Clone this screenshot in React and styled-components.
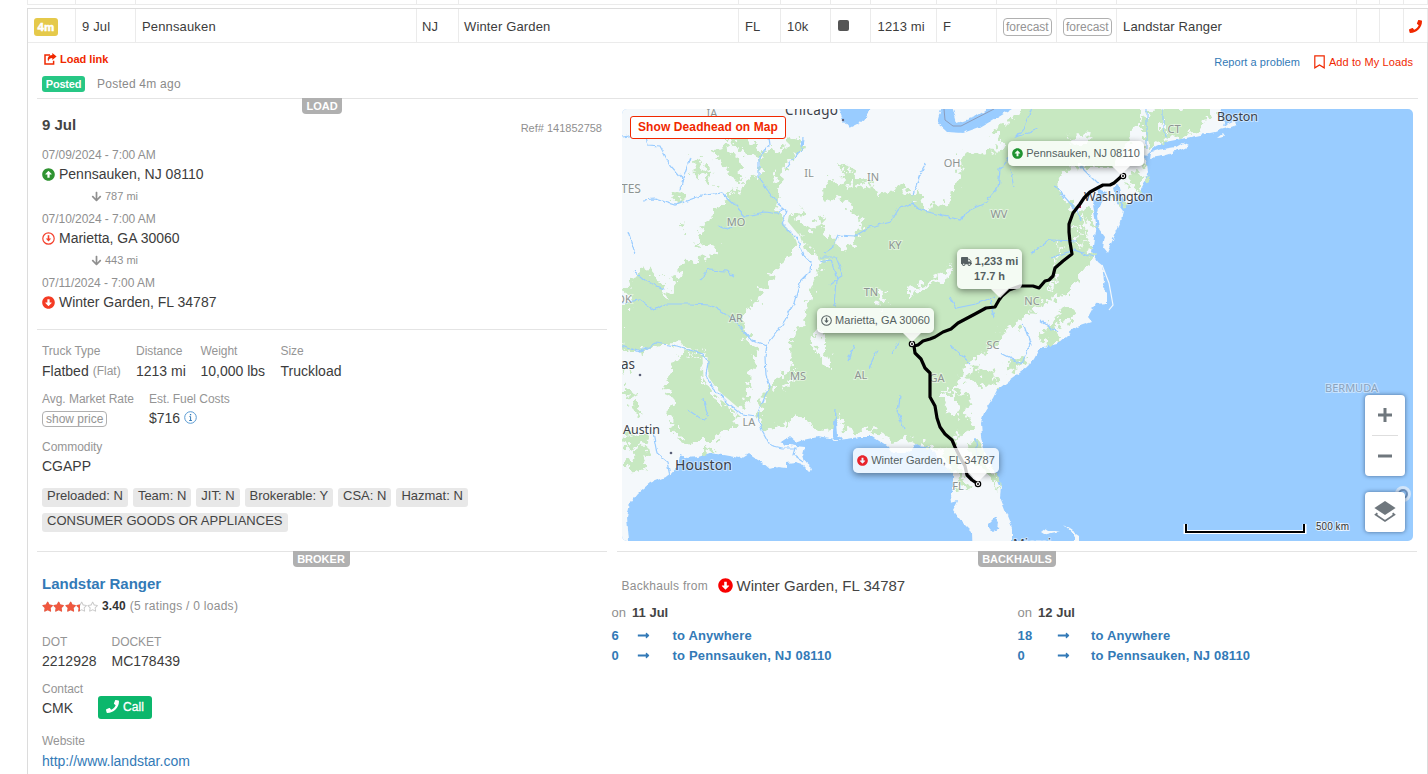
import React from "react";
import styled, { createGlobalStyle } from "styled-components";
import {
  FaArrowAltCircleUp,
  FaArrowAltCircleDown,
  FaArrowDown,
  FaLongArrowAltRight,
  FaPhone,
  FaTruck,
  FaStar,
  FaRegStar,
} from "react-icons/fa";

const GlobalStyle = createGlobalStyle`
  * { box-sizing: border-box; }
  body {
    margin: 0;
    background: #fff;
    overflow: hidden;
    font-family: "Liberation Sans", Arial, sans-serif;
    color: #3c3c3c;
  }
  svg { display: block; flex: none; }
`;

const Page = styled.div`
  height: 774px;
  overflow: hidden;
  padding-left: 27px;
`;

const TableRow = styled.div`
  display: grid;
  grid-template-columns: 48px 60px 281px 42px 280px 42px 50px 40px 66px 60px 60px 60px 240px 23px 24px 24px;
  height: ${(p) => p.$h}px;
  border-bottom: 1px solid #ebebeb;
  border-left: ${(p) => (p.$edge ? "1px solid #ebebeb" : "0")};
`;

const Cell = styled.div`
  display: flex;
  align-items: center;
  padding-left: ${(p) => p.$pad ?? 6}px;
  padding-top: 1px;
  margin-left: -1px;
  border-right: 1px solid #ebebeb;
  font-size: 13px;
  letter-spacing: 0.15px;
  white-space: nowrap;
`;

const Card = styled.div`
  margin-top: 3px;
  height: 800px;
  border: 1px solid #dcdcdc;
`;

const AgeBadge = styled.span`
  width: 24px;
  height: 18px;
  border-radius: 3px;
  background: #e5c94a;
  color: #fff;
  font-weight: 700;
  font-size: 11.5px;
  line-height: 18px;
  text-align: center;
  letter-spacing: 0.2px;
  -webkit-text-stroke: 0.5px #fff;
  margin-top: 1px;
`;

const OutlineTag = styled.span`
  display: inline-block;
  height: ${(p) => p.$h}px;
  line-height: ${(p) => p.$h - 2}px;
  margin-top: ${(p) => p.$mt || 0}px;
  padding: 0 ${(p) => p.$px}px;
  border: 1px solid #b0b0b0;
  border-radius: 4px;
  color: #949494;
  font-size: 12px;
  letter-spacing: 0;
`;

const Square = styled.span`
  width: 11px;
  height: 11px;
  border-radius: 2px;
  background: #555;
  margin-top: -1px;
`;

const TopBar = styled.div`
  display: flex;
  justify-content: space-between;
  height: 56px;
  margin: 0 9px;
  border-bottom: 1px solid #e4e4e4;
  padding: 9px 5px 0 5px;
`;

const LoadLink = styled.div`
  display: flex;
  align-items: center;
  gap: 3px;
  height: 14px;
  padding-left: 2px;
  color: #f02800;
  font-weight: 700;
  font-size: 11px;
`;

const PostedLine = styled.div`
  display: flex;
  align-items: center;
  gap: 12px;
  margin-top: 10px;
  height: 16px;
  color: #8a8a8a;
  font-size: 12px;
  letter-spacing: 0.24px;
`;

const PostedBadge = styled.span`
  width: 43px;
  height: 16px;
  line-height: 16px;
  text-align: center;
  border-radius: 3px;
  background: #27c785;
  color: #fff;
  font-weight: 700;
  font-size: 11px;
  letter-spacing: -0.2px;
`;

const Actions = styled.div`
  display: flex;
  align-items: center;
  gap: 4px;
  height: 20px;
  font-size: 11px;
  letter-spacing: 0.1px;
  color: #f02800;
`;

const Report = styled.a`
  color: #337ab7;
  margin-right: 10px;
  letter-spacing: 0.05px;
`;

const Columns = styled.div`
  display: grid;
  grid-template-columns: 570px 800px;
  column-gap: 10px;
  margin-left: 9px;
`;

const TabLabel = styled.div`
  width: ${(p) => p.$w}px;
  height: 16px;
  line-height: 16px;
  margin: -1px auto 0;
  position: relative;
  border-radius: 0 0 4px 4px;
  background: #b0b0b0;
  color: #fff;
  font-size: 11px;
  font-weight: 700;
  text-align: center;
`;

const LoadPane = styled.section`
  height: 232px;
  padding: 0 5px;
  border-bottom: 1px solid #e4e4e4;
`;

const DateRow = styled.div`
  display: flex;
  justify-content: space-between;
  height: 34px;
  padding-top: 1px;
  font-size: 11px;
  color: #8f8f8f;
  span { padding-top: 7px; }
`;

const Heading = styled.div`
  padding-top: ${(p) => p.$pt}px;
  font-size: 15px;
  line-height: 17px;
  font-weight: 700;
  color: ${(p) => p.$color || "#444"};
`;

const StopDate = styled.div`
  height: 14px;
  line-height: 14px;
  font-size: 12px;
  color: #8f8f8f;
  letter-spacing: -0.05px;
`;

const StopPlace = styled.div`
  display: flex;
  align-items: center;
  gap: 4px;
  height: 24px;
  font-size: 14px;
  color: #3c3c3c;
`;

const Leg = styled.div`
  display: flex;
  align-items: center;
  gap: 3px;
  height: 26px;
  padding: 0 0 6px 49px;
  font-size: 11px;
  color: #8f8f8f;
`;

const DetailPane = styled.section`
  height: 222px;
  padding: 14px 5px 0;
  border-bottom: 1px solid #e4e4e4;
`;

const Fields = styled.div`
  display: flex;
  height: ${(p) => p.$h}px;
`;

const Field = styled.div`
  width: ${(p) => p.$w}px;
  white-space: nowrap;
`;

const Label = styled.div`
  font-size: 12px;
  line-height: 14px;
  height: 14px;
  color: #959595;
  letter-spacing: -0.04px;
`;

const Value = styled.div`
  display: flex;
  align-items: center;
  gap: 4px;
  margin-top: ${(p) => p.$mt ?? 4}px;
  height: 17px;
  font-size: 14px;
  color: ${(p) => p.$color || "#3c3c3c"};
  small { font-size: 12px; color: #959595; padding-top: 1px; }
`;

const Chips = styled.div`
  display: flex;
  flex-wrap: wrap;
  gap: 6px 5px;
`;

const Chip = styled.span`
  height: 19px;
  line-height: 16px;
  padding: 0 5px;
  border-radius: 3px;
  background: #e8e8e8;
  font-size: 13px;
  color: #444;
`;

const BrokerPane = styled.section`
  padding: 0 7px 0 5px;
`;

const Rating = styled.div`
  display: flex;
  align-items: center;
  height: 16px;
  margin-top: 6px;
  font-size: 12px;
  letter-spacing: 0.27px;
  color: #8f8f8f;
  b { color: #333; margin: 0 4px; letter-spacing: 0.1px; }
`;

const Stars = styled.div`
  display: flex;
  color: ${(p) => p.$color};
`;

const StarStack = styled.div`
  position: relative;
  width: 56px;
  height: 11px;
`;

const StarFill = styled.div`
  position: absolute;
  inset: 0 auto 0 0;
  width: 38px;
  overflow: hidden;
`;

const BrokerFields = styled.div`
  padding-top: 21px;
`;

const CallButton = styled.button`
  display: flex;
  align-items: center;
  justify-content: center;
  gap: 4px;
  width: 54px;
  height: 23px;
  margin: 14px 0 0 0;
  padding: 0 0 2px 0;
  border: 0;
  border-radius: 3px;
  background: #0cb76c;
  color: #fff;
  font: 12px "Liberation Sans", Arial, sans-serif;
  letter-spacing: 0.1px;
  -webkit-text-stroke: 0.3px #fff;
`;

const BackhaulPane = styled.section`
  border-top: 1px solid #e4e4e4;
  height: 220px;
`;

const From = styled.div`
  display: flex;
  align-items: center;
  height: 20px;
  margin: 9px 0 0 4.5px;
  padding-bottom: 1px;
  font-size: 12px;
  letter-spacing: 0.27px;
  color: #8f8f8f;
  svg { margin: 0 3px 0 10.5px; }
  span { font-size: 15px; letter-spacing: 0; color: #444; }
  i { font-style: normal; }
`;

const Days = styled.div`
  display: grid;
  grid-template-columns: 406px 1fr;
  margin: 7px 0 0 -5.5px;
`;

const Day = styled.div`
  font-size: 13px;
  color: #8f8f8f;
  height: 22px;
  line-height: 20px;
  b { color: #444; margin-left: 2.5px; }
`;

const Haul = styled.a`
  display: grid;
  align-items: center;
  grid-template-columns: ${(p) => p.$cols};
  height: 20px;
  font-size: 13px;
  font-weight: 700;
  letter-spacing: 0.17px;
  color: #337ab7;
`;

const MapBox = styled.div`
  position: relative;
  width: 791px;
  height: 432px;
  margin: 10px 0 10px 5px;
  border-radius: 5px;
  overflow: hidden;
  background: #99ccff;
`;

const DeadheadButton = styled.button`
  position: absolute;
  left: 8px;
  top: 7px;
  width: 156px;
  height: 23px;
  padding: 0 0 2px;
  border: 1px solid #f02800;
  border-radius: 3px;
  background: #fff;
  color: #f02800;
  font: 700 12px "Liberation Sans", Arial, sans-serif;
  letter-spacing: 0.1px;
  white-space: nowrap;
`;

const Bubble = styled.div`
  position: absolute;
  left: ${(p) => p.$x}px;
  top: ${(p) => p.$y}px;
  width: ${(p) => p.$w}px;
  height: ${(p) => p.$h || 25}px;
  display: flex;
  flex-wrap: wrap;
  align-content: center;
  align-items: center;
  justify-content: center;
  gap: 0 3px;
  border-radius: 5px;
  background: rgba(255, 255, 255, 0.8);
  box-shadow: 0 2px 7px rgba(0, 0, 0, 0.45);
  color: #555f61;
  font-size: 11px;
  line-height: 15px;
  font-weight: ${(p) => (p.$bold ? 700 : 400)};
  white-space: nowrap;
  &::after {
    content: "";
    position: absolute;
    left: ${(p) => p.$tip}px;
    top: 100%;
    border: 9px solid transparent;
    border-top-color: rgba(255, 255, 255, 0.85);
    border-bottom: 0;
  }
`;

const Control = styled.div`
  position: absolute;
  right: 8px;
  top: ${(p) => p.$top}px;
  width: 40px;
  height: ${(p) => p.$h}px;
  display: flex;
  flex-direction: column;
  align-items: center;
  border-radius: 4px;
  background: #fff;
  box-shadow: 0 0 4px rgba(10, 30, 60, 0.55);
`;

const ControlHalf = styled.div`
  width: 26px;
  height: 40px;
  display: flex;
  align-items: center;
  justify-content: center;
  & + & { border-top: 1px solid #dedede; height: 41px; }
`;

function ShareIcon() {
  return (
    <svg width="13" height="12" viewBox="0 0 13 12">
      <path d="M6 2H1v9h8.600V7.800" fill="none" stroke="#f02800" strokeWidth="1.500" />
      <path d="M8.300 0L12.600 3.500 8.300 7V5C6.200 5 5 5.800 4.300 8.400 2.600 5 4.600 2.100 8.300 2z" fill="#f02800" />
    </svg>
  );
}

function StopRing({ size = 13, color }) {
  return (
    <svg width={size} height={size} viewBox="0 0 13 13">
      <circle cx="6.5" cy="6.5" r="5.7" fill="none" stroke={color} strokeWidth="1.2" />
      <path d="M6.5 3.2v4.3" stroke={color} strokeWidth="1.6" />
      <path d="M3.8 6.4h5.4L6.5 9.6z" fill={color} />
    </svg>
  );
}

function InfoIcon() {
  return (
    <svg width="13" height="13" viewBox="0 0 13 13">
      <circle cx="6.5" cy="6.5" r="5.8" fill="none" stroke="#5a9bd3" strokeWidth="1" />
      <path d="M5.4 5.6h1.200v3.800M5.200 9.500h2.700" fill="none" stroke="#337ab7" strokeWidth="1" />
      <rect x="5.9" y="3" width="1.300" height="1.300" fill="#337ab7" />
    </svg>
  );
}

function BookmarkIcon() {
  return (
    <svg width="11" height="14" viewBox="0 0 11 14">
      <path d="M.8.8h9.4v12L5.5 9.9.8 12.8z" fill="none" stroke="#f02800" strokeWidth="1.2" />
    </svg>
  );
}

function LayersIcon() {
  return (
    <svg width="22" height="22" viewBox="0 0 22 22">
      <path d="M11 0l10.6 7L11 14 .4 7z" fill="#6f777d" />
      <path d="M3.4 12.300L1.700 13.700 11 20l9.300-6.300L18.600 12.300" fill="none" stroke="#6f777d" strokeWidth="1.800" />
    </svg>
  );
}

const LAND =
  "M600 90H1228L1220 112 1221 118 1225 121 1223 127 1236 121 1237 125 1228 128 1220 130 1215 132 1205 134 1186 138 1165 142 1156 146 1149 152 1144 157 1147 163 1148 172 1144 184 1137 198 1127 205 1121 196 1118 184 1113 188 1117 202 1123 210 1121 222 1114 237 1107 253 1103 248 1105 236 1099 228 1097 215 1101 204 1107 192 1099 189 1093 205 1096 222 1094 238 1092 252 1098 262 1103 266 1105 280 1103 288 1107 293 1107 303 1095 304 1088 317 1092 322 1077 327 1067 335 1057 344 1040 348 1034 359 1028 367 1010 380 997 390 993 398 985 410 981 422 982 437 985 453 995 473 1001 487 1000 497 1005 510 1012 527 1012 560H973L972 532 962 522 953 510 958 500 951 502 950 496 953 488 953 473 943 465 935 453 927 446 917 445 905 453 893 453 887 446 873 437 860 437 847 439 835 440 817 437 803 440 795 443 787 438 781 442 795 446 805 447 803 455 805 462 812 468 810 472 802 464 795 462 787 463 787 468 778 467 770 469 763 463 753 457 748 453 740 458 723 455 710 453 697 457 687 458 680 455 678 466 670 475 650 483 638 493 630 503 627 517 629 541H600z";

const FOREST = [
  // Ozarks and the upper Mississippi
  "M698 238L707 218 723 202 730 192 744 189 749 176 763 172 758 163 764 150 775 154 787 142 803 137 804 144 796 154 787 166 777 173 780 190 777 208 785 222 792 228 800 240 797 248 783 262 771 278 760 295 750 306 740 318 743 330 753 347 757 360 753 370 747 383 749 397 741 410 730 405 720 397 707 380 705 357 690 351 677 343 660 345 640 350 618 346 618 306 632 306 634 298 624 291 634 277 650 268 663 282 668 300 672 286 684 264 686 256 695 262 718 253 718 248 697 244z",
  // East Texas
  "M683 350L703 357 704 380 712 396 740 414 733 425 722 432 713 440 695 440 690 443 680 437 672 428 668 415 673 398 666 382 673 365z",
  // Appalachia and the South
  "M1027 105L1007 125 993 131 1004 148 987 155 967 150 960 160 962 178 947 202 930 208 913 195 900 186 880 196 870 182 862 188 852 166 846 176 854 186 838 192 849 206 862 222 854 248 842 240 832 238 822 225 826 212 812 230 800 222 803 205 794 218 789 214 786 224 800 238 810 252 820 255 823 265 813 282 810 300 803 323 792 337 791 363 783 377 770 387 763 400 757 417 767 429 783 423 795 418 808 420 820 431 833 430 840 415 845 431 860 432 873 431 895 443 910 440 925 444 940 449 950 462 960 466 957 452 953 438 963 436 962 420 949 415 944 400 944 391 957 393 960 380 967 367 980 357 1000 341 1003 330 1020 323 1030 313 1040 305 1050 300 1067 295 1075 282 1087 265 1093 255 1088 238 1084 222 1080 212 1066 202 1058 190 1057 178 1070 170 1087 166 1113 166 1125 148 1133 130 1142 122 1150 108 1216 105 1212 118 1204 119 1202 132 1180 135 1160 141 1149 150 1142 132 1142 105z",
  // coastal plain
  "M944 358L962 367 976 357 967 350zM965 378l14-12 7 10 8-6 4 14-16 2zM955 396l10-6 6 13-4 12 6 14-10 6zM1005 365l14-9 8 4-9 8-10 5zM1040 335l10-12 10-6-4 12 4 10-12 6zM1056 318l12-12 6 8-6 10zM1100 230l-20-14 8-10 4 12z",
  "M950 466l10 1 9 20-6 4-6-14zM966 440l14 2 6 20 10 15 4 12-12-15-16-14z",
  // prairie woodlands
  "M694 158l5-2 2 14 6-4 6 22-4-2-6-14-8 4zM714 150l14-5 4 12 8 2 2 24-8-2-6-14-8-2zM669 196l10-5 8 8-12 4zM678 222l8 2-2 6-6-4zM727 135l28 6 6 14-10 4-14-12zM822 188l6-10 10 8 8-16 5 8-6 18-20 6zM841 162l8 2-3 8z",
  "M626 463l6-4 4-12 10-2 1 11-6 3 6 8-7 6-11-3zM624 386l10 5-4 8-6-4zM633 403l10 7-4 8-8-8zM622 436l14-4 14 6-10 6-14 5zM705 448l12-1-2 4-10 1zM623 364l6 3-4 5z",
  "M1126 178l18-10 2 12-8 12zM1117 196l6 8-3 8z",
];

const CLEARINGS =
  "M815 332l5-4 5 12 0 12 8 16-6 0-8-8-5-12zM784 385l10-10 0-6 2 6-6 8-5 8zM800 246l12 4 8 8-8 14-6-6zM832 238l16 2 8 6-14 4zM1059 243l-8 47 2 2 7-46zM1071 225l22 10-20-7zM1073 235l20 13-20-10zM1078 218l14 4-14-2zM907 290l30-13 14-11-4 12-25 9-15 10zM750 320l8 4 10 16-3 4-13-14zM830 215l10-6 6 8-8 8zM812 215l8-4 0 8-8 8zM962 137l6-3 4 6 8 2-4 4-8-4zM1066 140l12-5 16 2-8 5-16 2zM1008 112l6 5-8 6zM877 297l6-8 2 14-5 4zM1161 121l3-2 0 18-2-3z";

const RIVERS =
  "M767 128L769 145 759 158 759 177 768 190 777 203 787 211 782 224 797 239 804 256 811 262 810 272 800 282 794 303 785 320 777 332 767 345 765 358 766 375 770 386 763 400 757 415 762 430 770 445 782 448 795 448 793 455 803 462M642 200L655 199 675 205 700 196 722 193 735 205 745 216 765 212 778 214 783 207M787 168L794 158 802 149 803 137M622 137L645 133 648 145 660 146 670 165 683 180 680 190M690 158L683 178M820 257L836 257 843 275 830 284M820 262L831 260 837 280 835 306M824 253L832 248 838 235 855 236 870 227 890 222 897 210 912 203 920 210 940 215 960 220 970 210 985 203 998 188 1000 170 1010 157M913 195L922 170 926 163M622 345L640 352 655 343 677 346 703 354 708 362 706 375 713 388 728 403 743 415 757 417M743 330L752 340 767 346M622 303L640 300 655 310 665 304 690 304 710 305 735 320 743 330M700 280l8-10 18 1 8 5M634 271l12 10 18 8M688 410l12 8 6 1M703 398l5 18 1 0M653 432l4 22 10 8 3 14M836 410l-2 25M1163 109l0 22 5 7M1147 109l0 40M1032 107l-9 22-6 8 20-8M1080 166l18 18M1030 254l20-14 28 1M1050 258l24-8 20 7M1055 186l22 25 4 10M1010 168l4 20M950 297l6 11 20-4 20-8M900 342l-8 11M900 396l-2 18 6 15M848 360l6-14M877 350l-8 18M1023 323l8 22-10 18-20-10M950 345l20 18M975 438l4 22 6 0M990 300l4 18M1040 320l18 12M628 232l7 22M718 226l10 4 4-3";

const ROUTE =
  "M1123 175L1114 183 1110 185 1103 185 1090 192 1084 198 1080 204 1073 213 1069 224 1069 232 1070 242 1072 254 1063 261 1055 268 1053 276 1049 280 1045 281 1039 288 1033 286 1020 286 1009 290 1002 296 999 300 995 307 986 308 975 314 958 323 951 329 943 332 935 337 930 339 923 341 918 345 914 346 915 353 921 359 925 368 930 373 930 397 935 406 937 418 940 427 945 434 952 440 955 447 960 457 965 466 967 475 972 480 978 484";

const STATES = [
  ["IA", 712, 117], ["IL", 809, 177], ["IN", 873, 181], ["OH", 952, 167], ["MO", 736, 226],
  ["WV", 999, 218], ["KY", 895, 249], ["TN", 871, 296], ["NC", 1032, 305], ["AR", 736, 322],
  ["SC", 993, 349], ["GA", 937, 382], ["AL", 861, 379], ["MS", 798, 380], ["LA", 749, 426],
  ["FL", 958, 490], ["CT", 1174, 133], ["OK", 624, 303],
];

const CITIES = [
  ["Chicago", 785, 115, 13.5, 53], ["Boston", 1217, 121, 12.5, 41], ["Washington", 1084, 201, 12.5, 69],
  ["Houston", 675, 470, 14, 57], ["Austin", 623, 434, 12.5, 37], ["as", 621, 369, 13.5, 14],
  ["Miami", 1013, 548, 13, 38],
];

function MapArt() {
  return (
    <svg width="791" height="432" viewBox="622 109 791 432">
      <defs>
        <filter id="ragged" x="-5%" y="-5%" width="110%" height="110%" colorInterpolationFilters="sRGB">
          <feTurbulence type="fractalNoise" baseFrequency="0.13" numOctaves="3" seed="7" />
          <feDisplacementMap in="SourceGraphic" scale="20" xChannelSelector="R" yChannelSelector="G" />
        </filter>
        <filter id="coast" x="-5%" y="-5%" width="110%" height="110%" colorInterpolationFilters="sRGB">
          <feTurbulence type="fractalNoise" baseFrequency="0.15" numOctaves="2" seed="3" />
          <feDisplacementMap in="SourceGraphic" scale="5" xChannelSelector="R" yChannelSelector="G" />
        </filter>
      </defs>
      <g filter="url(#coast)">
        <path d={LAND} fill="#f4f8fb" />
        <path d="M1150 158L1151 152 1163 149 1176 147 1183 143 1189 146 1176 152 1162 156zM1218 137l5-4 2 3zM1040 533l5-4 3 2 12 0-17 4zM1063 525l7 4 9 6v8h-4v-7z" fill="#f4f8fb" />
      </g>
      <g filter="url(#ragged)">
        {FOREST.map((d) => <path key={d} d={d} fill="#c7e8c1" />)}
        <path d={CLEARINGS} fill="#f4f8fb" />
      </g>
      <path d="M777 203L783 206 787 212 785 222 798 238 803 255 811 262" fill="none" stroke="#f4f8fb" strokeWidth="5" />
      <path d="M705 357L706 378 716 392 730 404 745 417" fill="none" stroke="#f4f8fb" strokeWidth="5" />
      <g filter="url(#coast)">
        <path d={RIVERS} fill="none" stroke="#99ccff" strokeWidth="1.2" />
        <path d="M838 105L843 120 850 128 860 123 867 117 872 105zM942 105L937 123 947 132 963 133 980 127 997 117 1017 105zM988 524l6-6 5 4-1 6-5 3-5-3zM836 412l2 22 4 5-10 0zM782 442l8-6 6 5-3 4-8 0z" fill="#99ccff" />
        <path d="M952 105L957 123 975 117 994 105z" fill="#f4f8fb" />
      </g>
      <path d="M944 109l1 11 8 6h8l33-17" fill="none" stroke="#8b9cbc" strokeWidth="1" />
      <path d="M1102 265l7 18 4 22-4 5" fill="none" stroke="#f4f8fb" strokeWidth="1.2" />
      <g fontFamily="'Noto Sans', 'Open Sans', sans-serif" stroke="#ffffff" strokeOpacity=".45" strokeWidth="2" paintOrder="stroke">
        <g fontSize="11" fill="#8d9492" textAnchor="middle">
          {STATES.map(([t, x, y]) => <text key={t} x={x} y={y}>{t}</text>)}
        </g>
        <text x="621" y="193" fontSize="12" fill="#8d9492">TES</text>
        <text x="1325" y="392" fontSize="11" fill="#8aa3bd" textLength="53">BERMUDA</text>
        {CITIES.map(([t, x, y, s, w]) => (
          <text key={t} x={x} y={y} fontSize={s} fill="#3b4048" textLength={w}>{t}</text>
        ))}
      </g>
      <g fill="#5b5f78">
        <circle cx="843" cy="120" r="1.200" />
        <circle cx="640" cy="375" r="1.300" />
        <circle cx="671" cy="453" r="1.300" />
        <rect x="1077" y="205" width="4" height="3" fill="#b03060" />
      </g>
      <path d={ROUTE} fill="none" stroke="#000" strokeWidth="3.200" strokeLinejoin="round" />
      {[[1123, 176], [912, 344], [978, 484]].map(([x, y]) => (
        <g key={x}>
          <circle cx={x} cy={y} r="2.700" fill="#fff" stroke="#000" strokeWidth="1.200" />
          <circle cx={x} cy={y} r="1" fill="#000" />
        </g>
      ))}
      <circle cx="1403" cy="494" r="6" fill="none" stroke="#d3e6fa" strokeWidth="4" />
      <circle cx="1403" cy="494" r="4" fill="none" stroke="#6f94c0" strokeWidth="2" />
      <path d="M1185.500 524v8h119v-8" fill="none" stroke="#fff" strokeWidth="4" />
      <path d="M1186 524v8h118v-8" fill="none" stroke="#000" strokeWidth="2" />
      <text x="1316" y="530" fontSize="10" fontFamily="'Liberation Sans', sans-serif" fill="#333" stroke="#fff" strokeOpacity=".7" strokeWidth="2" paintOrder="stroke" textLength="33">500 km</text>
    </svg>
  );
}

function Stop({ date, icon, place }) {
  return (
    <>
      <StopDate>{date}</StopDate>
      <StopPlace>{icon}{place}</StopPlace>
    </>
  );
}

function BackhaulDay({ date, rows, cols }) {
  return (
    <div>
      <Day>on <b>{date}</b></Day>
      {rows.map(([n, to]) => (
        <Haul key={to} $cols={cols}>
          <span>{n}</span>
          <FaLongArrowAltRight size={13} />
          <span>{to}</span>
        </Haul>
      ))}
    </div>
  );
}

const CHIPS = ["Preloaded: N", "Team: N", "JIT: N", "Brokerable: Y", "CSA: N", "Hazmat: N", "CONSUMER GOODS OR APPLIANCES"];

export default function App() {
  return (
    <>
      <GlobalStyle />
      <Page>
        <TableRow $h={5} $edge>
          {Array.from({ length: 16 }, (_, i) => <Cell key={i} />)}
        </TableRow>
        <Card>
          <TableRow $h={34}>
            <Cell $pad={7}><AgeBadge>4m</AgeBadge></Cell>
            <Cell $pad={7}>9 Jul</Cell>
            <Cell $pad={7}>Pennsauken</Cell>
            <Cell>NJ</Cell>
            <Cell>Winter Garden</Cell>
            <Cell $pad={7}>FL</Cell>
            <Cell $pad={7}>10k</Cell>
            <Cell $pad={8}><Square /></Cell>
            <Cell $pad={7.5}>1213 mi</Cell>
            <Cell $pad={7}>F</Cell>
            <Cell $pad={7}><OutlineTag $h={18} $px={2} $mt={2}>forecast</OutlineTag></Cell>
            <Cell $pad={7}><OutlineTag $h={18} $px={2} $mt={2}>forecast</OutlineTag></Cell>
            <Cell $pad={7}>Landstar Ranger</Cell>
            <Cell />
            <Cell />
            <Cell $pad={6}><FaPhone size={13} color="#f02800" /></Cell>
          </TableRow>
          <TopBar>
            <div>
              <LoadLink><ShareIcon />Load link</LoadLink>
              <PostedLine><PostedBadge>Posted</PostedBadge>Posted 4m ago</PostedLine>
            </div>
            <Actions>
              <Report>Report a problem</Report>
              <BookmarkIcon />
              Add to My Loads
            </Actions>
          </TopBar>
          <Columns>
            <div>
              <LoadPane>
                <TabLabel $w={40}>LOAD</TabLabel>
                <DateRow>
                  <Heading $pt={1}>9 Jul</Heading>
                  <span>Ref# 141852758</span>
                </DateRow>
                <Stop date="07/09/2024 - 7:00 AM" icon={<FaArrowAltCircleUp size={13} color="#2f9331" />} place="Pennsauken, NJ 08110" />
                <Leg><FaArrowDown size={11} />787 mi</Leg>
                <Stop date="07/10/2024 - 7:00 AM" icon={<StopRing color="#f4402c" />} place="Marietta, GA 30060" />
                <Leg><FaArrowDown size={11} />443 mi</Leg>
                <Stop date="07/11/2024 - 7:00 AM" icon={<FaArrowAltCircleDown size={13} color="#f43b24" />} place="Winter Garden, FL 34787" />
              </LoadPane>
              <DetailPane>
                <Fields $h={48}>
                  <Field $w={94}><Label>Truck Type</Label><Value>Flatbed <small>(Flat)</small></Value></Field>
                  <Field $w={64.5}><Label>Distance</Label><Value>1213 mi</Value></Field>
                  <Field $w={80}><Label>Weight</Label><Value>10,000 lbs</Value></Field>
                  <Field $w={80}><Label>Size</Label><Value>Truckload</Value></Field>
                </Fields>
                <Fields $h={48}>
                  <Field $w={107}><Label>Avg. Market Rate</Label><Value><OutlineTag $h={16} $px={3}>show price</OutlineTag></Value></Field>
                  <Field $w={100}><Label>Est. Fuel Costs</Label><Value $mt={3}>$716 <InfoIcon /></Value></Field>
                </Fields>
                <Fields $h={48}>
                  <Field $w={120}><Label>Commodity</Label><Value $mt={3}>CGAPP</Value></Field>
                </Fields>
                <Chips>{CHIPS.map((c) => <Chip key={c}>{c}</Chip>)}</Chips>
              </DetailPane>
              <BrokerPane>
                <TabLabel $w={57}>BROKER</TabLabel>
                <Heading $color="#337ab7" $pt={8}>Landstar Ranger</Heading>
                <Rating>
                  <StarStack>
                    <Stars $color="#c9c9c9">{[0, 1, 2, 3, 4].map((i) => <FaRegStar key={i} size={11.3} />)}</Stars>
                    <StarFill><Stars $color="#f0583f">{[0, 1, 2, 3].map((i) => <FaStar key={i} size={11.3} />)}</Stars></StarFill>
                  </StarStack>
                  <b>3.40</b>(5 ratings / 0 loads)
                </Rating>
                <BrokerFields>
                  <Fields $h={47}>
                    <Field $w={69.5}><Label>DOT</Label><Value $mt={3}>2212928</Value></Field>
                    <Field $w={100}><Label>DOCKET</Label><Value $mt={3}>MC178439</Value></Field>
                  </Fields>
                  <Fields $h={52}>
                    <Field $w={56}><Label>Contact</Label><Value $mt={3}>CMK</Value></Field>
                    <CallButton><FaPhone size={13} />Call</CallButton>
                  </Fields>
                  <Fields $h={48}>
                    <Field $w={160}><Label>Website</Label><Value $color="#337ab7">http://www.landstar.com</Value></Field>
                  </Fields>
                </BrokerFields>
              </BrokerPane>
            </div>
            <div>
              <MapBox>
                <MapArt />
                <DeadheadButton>Show Deadhead on Map</DeadheadButton>
                <Bubble $x={386} $y={32} $w={136} $tip={104}>
                  <FaArrowAltCircleUp size={11} color="#1f9331" />Pennsauken, NJ 08110
                </Bubble>
                <Bubble $x={335} $y={140} $w={65} $h={40} $tip={34} $bold>
                  <FaTruck size={11} />1,233 mi<span>17.7 h</span>
                </Bubble>
                <Bubble $x={195} $y={199} $w={117} $tip={86}>
                  <StopRing size={11} color="#555f61" />Marietta, GA 30060
                </Bubble>
                <Bubble $x={231} $y={339} $w={146} $tip={116}>
                  <FaArrowAltCircleDown size={11} color="#e8242c" />Winter Garden, FL 34787
                </Bubble>
                <Control $top={286} $h={81}>
                  <ControlHalf>
                    <svg width="14" height="14" viewBox="0 0 14 14"><path d="M0 7h14M7 0v14" stroke="#6f777d" strokeWidth="3" /></svg>
                  </ControlHalf>
                  <ControlHalf>
                    <svg width="14" height="14" viewBox="0 0 14 14"><path d="M0 7h14" stroke="#6f777d" strokeWidth="3" /></svg>
                  </ControlHalf>
                </Control>
                <Control $top={383} $h={40}>
                  <ControlHalf><LayersIcon /></ControlHalf>
                </Control>
              </MapBox>
              <BackhaulPane>
                <TabLabel $w={78}>BACKHAULS</TabLabel>
                <From><i>Backhauls from</i> <FaArrowAltCircleDown size={15} color="#f80000" /><span>Winter Garden, FL 34787</span></From>
                <Days>
                  <BackhaulDay date="11 Jul" cols="25.5px 35.5px 1fr" rows={[["6", "to Anywhere"], ["0", "to Pennsauken, NJ 08110"]]} />
                  <BackhaulDay date="12 Jul" cols="39px 34.5px 1fr" rows={[["18", "to Anywhere"], ["0", "to Pennsauken, NJ 08110"]]} />
                </Days>
              </BackhaulPane>
            </div>
          </Columns>
        </Card>
      </Page>
    </>
  );
}
